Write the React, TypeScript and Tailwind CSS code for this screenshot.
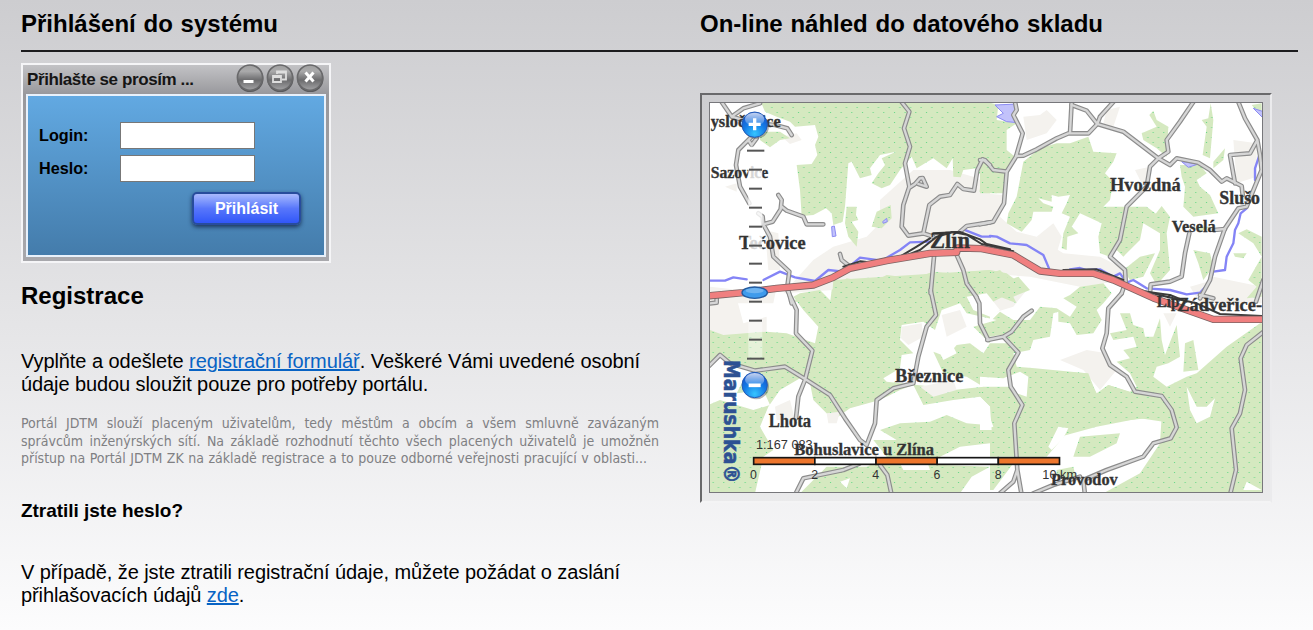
import React from "react";

const quads: Record<string, string> = {
  tl: "translate(0 0)",
  tr: "translate(840 0)",
  bl: "translate(0 600)",
  br: "translate(840 600)",
};
type Shape = [string, string];

const builtUp: Shape[] = [
  ["tl", "M540 330 L640 240 L750 240 L835 265 L870 310 L870 640 L400 600 L250 610 L340 510 L400 470 L500 440 L540 400Z"],
  ["tl", "M30 590 L120 600 L230 590 L220 640 L30 640Z M245 140 L290 130 L305 150 L270 162Z M75 290 L110 280 L110 305Z M195 420 L235 430 L240 540 L205 540Z"],
  ["tr", "M0 310 L75 315 L60 380 L110 425 L170 440 L250 490 L360 500 L440 540 L440 570 L300 590 L150 560 L0 550Z"],
  ["tr", "M130 80 L180 75 L200 60 L230 90 L200 130 L140 150Z M380 60 L420 50 L400 110 L370 100Z M465 240 L510 230 L490 290Z M760 150 L830 160 L830 260 L770 280Z M700 560 L845 590 L845 640 L650 640Z M170 440 L220 400 L245 440 L230 490Z M630 590 L700 570 L660 640Z"],
  ["bl", "M30 20 L110 25 L130 100 L200 80 L200 160 L30 130Z"],
  ["br", "M0 0 L140 0 L100 50 L0 80Z M240 210 L320 180 L380 190 L410 240 L360 300 L310 240Z M550 70 L590 70 L570 110Z"],
];

const forest: Shape[] = [
  ["tl", "M180 30 L870 30 L890 310 L838 305 L850 240 L835 255 L830 235 L790 240 L782 262 L760 260 L758 205 L740 235 L700 205 L650 235 L635 200 L600 240 L570 285 L545 295 L515 280 L535 250 L555 225 L545 205 L588 185 L540 195 L510 235 L515 255 L480 265 L455 215 L445 220 L435 350 L428 395 L400 405 L395 370 L378 355 L340 375 L305 378 L300 300 L290 225 L335 222 L352 195 L345 165 L355 140 L345 105 L285 110 L270 95 L230 80 L195 65Z"],
  ["tl", "M440 350 L470 350 L468 375 L475 390 L455 395 L475 425 L470 470 L445 440 L435 400Z M515 410 L530 365 L572 345 L575 385 L545 415Z M180 125 L240 125 L270 145 L240 150 L210 172 L180 150Z"],
  ["tl", "M390 640 L395 600 L440 565 L500 575 L510 605 L520 575 L560 555 L640 565 L700 545 L760 550 L870 540 L920 550 L960 580 L930 610 L870 640Z M280 635 L310 612 L330 635Z"],
  ["tr", "M0 30 L55 45 L50 90 L110 100 L80 120 L80 180 L105 200 L85 240 L75 310 L0 310Z"],
  ["tr", "M130 215 L180 175 L230 160 L270 160 L325 140 L340 185 L410 190 L400 215 L375 250 L400 275 L390 330 L370 350 L430 350 L500 350 L540 380 L540 430 L490 400 L480 450 L440 490 L430 500 L410 480 L390 500 L360 490 L355 440 L365 400 L300 370 L275 410 L295 430 L262 440 L260 480 L245 475 L250 430 L270 380 L245 370 L260 340 L270 315 L235 320 L215 315 L215 335 L175 325 L190 340 L220 350 L215 365 L160 365 L155 390 L125 425 L80 400 L85 370 L110 320Z"],
  ["tr", "M485 130 L530 110 L508 75 L520 62 L530 90 L565 110 L560 200 L530 175 L490 150Z M665 90 L685 85 L692 40 L700 90 L690 205 L668 195 L680 110Z M700 215 L735 175 L730 210 L700 235Z"],
  ["tr", "M600 225 L660 225 L680 250 L650 270 L660 290 L690 315 L715 370 L640 380 L610 350 L615 290 L605 260Z M520 380 L545 348 L570 380 L560 430 L570 540 L530 585 L510 550 L540 480 L540 430Z M480 500 L525 490 L490 560 L450 570 L430 540Z"],
  ["tr", "M640 480 L690 490 L700 530 L670 570 L655 520Z M760 490 L800 490 L790 505 L765 500Z M800 418 L845 440 L845 500 L820 460 L775 430Z M845 500 L845 620 L800 625 L830 590 L805 570Z M815 45 L845 40 L845 80Z M650 410 L690 410 L660 425Z"],
  ["tr", "M0 560 L60 540 L90 570 L115 560 L150 600 L100 620 L110 640 L60 620 L0 610Z M300 590 L370 580 L395 610 L370 640 L270 615Z"],
  ["bl", "M30 120 L70 135 L200 125 L260 130 L345 160 L355 110 L310 60 L280 20 L300 10 L360 0 L395 35 L400 -30 L870 -60 L870 610 L30 610Z"],
  ["br", "M-20 160 L80 160 L60 135 L30 140 L30 95 L60 65 L100 90 L150 90 L180 50 L230 55 L270 80 L290 50 L250 25 L270 15 L340 20 L370 40 L350 60 L365 90 L340 130 L290 135 L270 100 L235 95 L235 65 L220 70 L210 140 L160 150 L150 180 L100 190 L110 230 L165 235 L320 250 L350 310 L385 285 L450 305 L470 290 L450 250 L410 215 L450 205 L430 180 L470 170 L460 140 L400 150 L390 130 L440 120 L420 70 L450 70 L460 105 L490 115 L495 140 L520 140 L540 85 L545 150 L555 195 L590 105 L600 200 L565 220 L530 230 L520 260 L560 290 L620 260 L650 250 L740 170 L840 100 L860 100 L860 610 L370 610 L480 550 L540 460 L545 380 L450 390 L350 400 L260 430 L200 500 L0 500 L0 420 L40 410 L0 300 L-20 300Z"],
  ["br", "M145 240 L325 250 L350 315 L385 285 L460 310 L540 320 L580 400 L480 385 L350 410 L240 440 L190 500 L110 500 L105 400 L145 330Z M615 160 L640 150 L655 240 L610 245Z M0 0 L40 5 L0 40Z M230 540 L280 530 L290 570 L230 560Z M280 500 L300 440 L420 430 L410 460 L330 500Z M0 510 L100 520 L40 600 L-20 600Z"],
];

const clearings: Shape[] = [
  ["bl", "M180 410 L205 350 L240 300 L300 265 L330 280 L340 330 L400 390 L450 355 L520 335 L560 320 L600 300 L640 285 L670 345 L760 330 L840 320 L870 350 L860 405 L800 400 L740 375 L690 395 L600 400 L540 420 L590 450 L520 450 L560 500 L500 530 L380 530 L300 610 L165 610 L190 500 L220 480Z"],
  ["bl", "M25 230 L60 200 L110 225 L180 240 L130 270 L110 310 L190 300 L210 345 L160 360 L60 330 L25 345Z"],
  ["bl", "M550 265 L600 235 L605 195 L640 190 L600 150 L605 105 L670 95 L705 120 L725 60 L780 40 L800 70 L890 90 L820 110 L870 160 L850 190 L810 160 L770 165 L740 200 L700 185 L730 250 L800 260 L850 290 L760 300 L700 290 L560 275Z M720 190 L760 170 L770 190 L730 210Z M800 20 L860 10 L900 60 L870 80 L820 60Z"],
  ["bl", "M420 575 L450 565 L440 595Z M600 520 L680 510 L690 540 L610 540Z M720 500 L780 470 L870 460 L870 530 L730 525Z M815 560 L870 530 L870 610 L780 610Z"],
  ["br", "M0 320 L30 350 L35 420 L0 420Z M620 290 L650 350 L680 350 L705 325 L690 380 L650 400 L630 360Z M790 600 L800 575 L845 600Z M0 260 L70 265 L120 245 L145 260 L140 320 L110 310 L90 290 L0 290Z"],
  ["br", "M205 470 L235 410 L265 415 L250 445 L215 480Z"],
];

const hamlets: Shape[] = [
  ["bl", "M225 350 L270 330 L285 390 L230 390Z M605 110 L665 100 L670 140 L625 165 L603 145Z M725 75 L780 60 L800 110 L740 140Z M380 370 L420 365 L410 400 L385 400Z M660 290 L760 270 L770 300 L700 320Z"],
];

const water: Shape[] = [
  ["tr", "M45 45 L112 42 L100 70 L112 98 L80 95 L50 80 L70 70Z M605 215 L655 222 L625 232Z M820 55 L850 65 L850 85Z"],
  ["tl", "M395 410 L403 408 L408 438 L397 440Z M548 395 L560 385 L562 395 L550 400Z"],
];

const rivers: Shape[] = [
  ["tl", "M25 572 L75 572 L100 562 L140 568 M190 570 L240 545 L285 562 L345 573 L385 540 L430 545 L480 503 L545 512 L600 480 L630 457 L690 455 M790 418 L845 440 L870 440"],
  ["tr", "M30 438 L50 440 L90 460 L140 465 L190 495 L207 535 M270 538 L300 534 L320 540 L360 538 L400 560 L420 550 L440 578 L460 570 L500 595 L570 600 L620 613 L660 608 L690 575 L700 545 L735 540 L740 500 L760 460 L765 420 L775 400 L782 370 L800 355 M825 270 L825 235 L840 190"],
];

const rails: Shape[] = [
  ["tl", "M430 530 L480 514 L520 518 L600 500 L650 470 L690 445 M610 500 L660 480 L710 440 L760 426 L800 434 L845 462 L940 484 M700 430 L780 426 L840 448 L860 462 L930 478"],
  ["tr", "M250 540 L350 538 L430 570 M500 605 L570 615 L620 635"],
  ["br", "M480 0 L560 20 L650 40 L720 72 L850 78"],
];

const roads: Shape[] = [
  ["tl", "M605 36 L628 65 L612 115 L630 170 L615 220 L628 290 L610 345 L605 410 L625 437 L670 430 L700 440 M628 293 L645 282 L660 265 L668 264 L680 290 L655 282 M670 430 L688 345 L720 320 L750 315 L772 282 L790 297 L822 302 L832 240 L848 208 L870 225"],
  ["tl", "M65 36 L95 80 L130 55 L180 40 M95 80 L165 100 L225 105 L262 115 L275 135 M155 140 L115 180 L108 225 L120 290 L148 340 M145 150 L155 165 L170 145"],
  ["tl", "M175 370 L188 380 L190 403 L218 395 L242 358 L245 330 L235 315 M245 350 L260 362 L310 380 L320 403 L370 403 M190 403 L210 440 L220 500 L268 545 L262 590 L275 640 M450 530 L425 510 L420 492"],
  ["tl", "M702 500 L692 610 M768 490 L790 540 L800 580 L830 622 M780 425 L800 408 L870 397"],
  ["tr", "M105 36 L110 60 L100 75 L128 130 L108 200 L80 245 L72 340 L40 395 L0 403 M0 210 L15 210 L40 240 L80 245 M108 198 L130 197 L170 178 L230 145 L265 130 L325 130 L352 102 L360 80 L400 36 M275 36 L270 130"],
  ["tr", "M275 45 L320 62 L352 102 L430 125 L535 205 M640 36 L600 95 L560 150 L565 185 L535 205 L510 230 L500 290 L440 350 L430 400 L420 450 L390 500 L435 540 L437 575 L425 610"],
  ["tr", "M535 205 L570 225 L590 205 L655 218 L690 240 L725 275 L740 265 L785 288 L788 315 M775 36 L795 85 L832 150 L840 195 L845 240 L800 350 L775 355 L735 415 L705 500 L690 570 L660 625 M832 150 L810 190 L750 195 L765 280"],
  ["tr", "M628 430 L615 490 L605 560 L570 575 L512 583 L510 610 M702 420 L735 417 M850 570 L828 635 M660 615 L700 625"],
  ["bl", "M262 0 L290 60 L288 130 L337 182 L315 270 L295 320 L288 385 M20 235 L60 195 L90 220 L165 242 L255 230 L320 270 L390 315 L435 385 L480 450 L500 465 L525 400 L530 330 L580 295 L640 280 L655 200 L680 110 L708 75 L692 0"],
  ["bl", "M828 20 L838 40 L840 100 L865 150 M285 615 L310 565 L430 540 L480 520 M540 525 L562 555 L575 615 M30 40 L50 38 L50 25"],
  ["br", "M425 10 L385 55 L380 130 L367 175 L390 225 L440 260 L465 305 L545 318 L575 360 L590 412 L572 445 L520 460 L490 500 L380 540 L310 570 L315 615"],
  ["br", "M22 150 L70 140 L115 188 L85 240 L92 290 L127 345 L103 400 L112 540 L125 615 M112 540 L100 575 L60 610 M70 140 L95 125 L130 80 L155 62"],
  ["br", "M855 122 L800 165 L782 205 L795 300 L780 370 L755 415 L768 540 L750 615 M160 610 L220 585 L300 560"],
];

const highway = "M20 618 L130 608 L230 595 L340 585 L400 562 L450 535 L560 512 L690 490 L770 487 L772 474 L845 476 L940 495 L1020 543 L1080 550 L1180 550 L1240 570 L1360 624 L1540 688 L1700 688";

const places: [string, number, number, number, number][] = [
  ["ysločovice", 32, 110, 210, 50],
  ["Sazovice", 32, 264, 173, 50],
  ["Tečovice", 117, 478, 200, 55],
  ["Zlín", 690, 474, 120, 68],
  ["Hvozdná", 1230, 304, 212, 56],
  ["Slušo", 1558, 341, 122, 55],
  ["Veselá", 1415, 427, 132, 52],
  ["Líp", 1370, 650, 68, 52],
  ["Zádveřice-", 1432, 662, 254, 55],
  ["Březnice", 585, 876, 205, 54],
  ["Lhota", 206, 1010, 127, 54],
  ["Bohuslavice u Zlína", 283, 1095, 419, 52],
  ["Provodov", 1053, 1186, 200, 52],
];

function Shapes({ items, ...rest }: { items: Shape[] } & React.SVGProps<SVGPathElement>) {
  return (
    <>
      {items.map(([q, d], i) => (
        <path key={i} d={d} transform={quads[q]} {...rest} />
      ))}
    </>
  );
}

function MapView() {
  const line = { fill: "none", strokeLinejoin: "round", strokeLinecap: "round" } as const;
  return (
    <svg className="block h-[391px] w-[554px] border border-[#77777b]" viewBox="30 39 1656 1167" preserveAspectRatio="none">
      <defs>
        <pattern id="trees" width="32" height="30" patternUnits="userSpaceOnUse">
          <rect width="32" height="30" fill="#d5e9c0" />
          <rect x="6" y="6" width="3" height="3" fill="#5cd882" />
          <rect x="22" y="21" width="3" height="3" fill="#5cd882" />
        </pattern>
        <radialGradient id="ball" cx=".5" cy=".85" r=".8">
          <stop offset="0" stopColor="#35c4ff" />
          <stop offset=".55" stopColor="#147be6" />
          <stop offset="1" stopColor="#1754cb" />
        </radialGradient>
        <linearGradient id="gloss" x2="0" y2="1">
          <stop stopColor="#fff" stopOpacity=".75" />
          <stop offset="1" stopColor="#fff" stopOpacity=".1" />
        </linearGradient>
      </defs>
      <rect x="27" y="36" width="1662" height="1173" fill="#fff" />
      <Shapes items={builtUp} fill="#f4f2ee" />
      <Shapes items={forest} fill="url(#trees)" />
      <Shapes items={clearings} fill="#fff" />
      <Shapes items={hamlets} fill="#f4f2ee" />
      <Shapes items={water} fill="#c2c2fb" stroke="#8b8bf2" strokeWidth="3" />
      <Shapes items={rivers} {...line} stroke="#8484f6" strokeWidth="7" />
      <Shapes items={roads} {...line} stroke="#8c8c8c" strokeWidth="14" />
      <Shapes items={roads} {...line} stroke="#d6d6d6" strokeWidth="7" />
      <Shapes items={rails} {...line} stroke="#3b3b3b" strokeWidth="6" />
      <path d={highway} {...line} strokeLinecap="butt" stroke="#7d6464" strokeWidth="22" />
      <path d={highway} {...line} strokeLinecap="butt" stroke="#f07f7f" strokeWidth="17" />
      <g className="font-['Liberation_Serif',serif] font-bold" fill="#333" stroke="#333" strokeWidth="1">
        {places.map(([name, x, y, w, size]) => (
          <text key={name} x={x} y={y} fontSize={size} textLength={w} lengthAdjust="spacingAndGlyphs">
            {name}
          </text>
        ))}
      </g>
      <rect x="145" y="170" width="42" height="410" fill="#fff" opacity=".8" />
      <rect x="145" y="630" width="42" height="180" fill="#fff" opacity=".4" />
      <g fill="#555">
        {[182, 239, 296, 353, 410, 467, 521, 578, 635, 692, 749, 806].map((y, i) => (
          <rect key={y} x={i % 11 ? 147 : 141} y={y - 3} width={i % 11 ? 39 : 52} height="6" />
        ))}
      </g>
      <g>
        <ellipse cx="168" cy="109" rx="39" ry="38" fill="#555" opacity=".45" />
        <circle cx="164" cy="104" r="38" fill="url(#ball)" stroke="#235bb7" strokeWidth="3" />
        <ellipse cx="164" cy="88" rx="29" ry="20" fill="url(#gloss)" />
        <path d="M146 103H182M164 85V121" stroke="#fff" strokeWidth="10" />
        <ellipse cx="164" cy="608" rx="38" ry="17" fill="#3f9bec" stroke="#235b9f" strokeWidth="4" />
        <ellipse cx="164" cy="602" rx="27" ry="8" fill="#fff" opacity=".25" />
        <ellipse cx="168" cy="890" rx="39" ry="38" fill="#555" opacity=".45" />
        <circle cx="164" cy="885" r="38" fill="url(#ball)" stroke="#235bb7" strokeWidth="3" />
        <ellipse cx="164" cy="869" rx="29" ry="20" fill="url(#gloss)" />
        <path d="M146 886H182" stroke="#fff" strokeWidth="11" />
      </g>
      <text className="font-['DejaVu_Sans_Condensed','DejaVu_Sans',sans-serif] font-bold" transform="translate(71 810) rotate(90)" fontSize="62" fill="#2d5193" stroke="#2d5193" strokeWidth="1.500" textLength="370" lengthAdjust="spacingAndGlyphs">
        Marushka®
      </text>
      <g className="font-['Liberation_Sans',sans-serif]" fontSize="37" fill="#333">
        <text x="168" y="1078" textLength="170" lengthAdjust="spacingAndGlyphs">1:167 083</text>
        {["0", "2", "4", "6", "8"].map((n, i) => (
          <text key={n} x={160 + i * 183.7} y="1166" textAnchor="middle">{n}</text>
        ))}
        <text x="1027" y="1166" textLength="104" lengthAdjust="spacingAndGlyphs">10 km</text>
      </g>
      <g stroke="#151515" strokeWidth="5">
        {[0, 1, 2, 3, 4].map((i) => (
          <rect key={i} x={161 + i * 183.5} y="1103" width="183.5" height="20" fill={i % 2 ? "#fff" : "#ee762d"} />
        ))}
      </g>
    </svg>
  );
}

function WindowIcon({ kind }: { kind: "min" | "restore" | "close" }) {
  return (
    <svg className="h-[30px] w-[30px]" viewBox="0 0 30 30">
      <defs>
        <linearGradient id={kind} x2="0" y2="1">
          <stop stopColor="#a0a0a1" />
          <stop offset=".25" stopColor="#aaaaab" />
          <stop offset=".5" stopColor="#7d7d7f" />
          <stop offset=".6" stopColor="#6c6c6e" />
          <stop offset="1" stopColor="#a3a3a5" />
        </linearGradient>
      </defs>
      <circle cx="15.3" cy="15.8" r="13.2" fill="#59595b" />
      <circle cx="15" cy="14.6" r="12.6" fill={`url(#${kind})`} stroke="#69696b" strokeWidth="1.600" />
      {kind === "min" && <path d="M8.500 18.500h10" stroke="#fff" strokeWidth="3" />}
      {kind === "restore" && <path d="M12 11V8.500h9v8h-4M8 13h8v6h-8zM12 9.500h9M8 14h8" fill="none" stroke="#dedede" strokeWidth="1.800" />}
      {kind === "close" && <path d="m10.500 9.500 8 9m0-9-8 9" stroke="#fff" strokeWidth="3" />}
    </svg>
  );
}

function Line({ w, children }: { w: string; children: React.ReactNode }) {
  return <div className={`${w} whitespace-nowrap text-justify [text-align-last:justify]`}>{children}</div>;
}

export default function App() {
  return (
    <div className="h-[630px] w-[1313px] overflow-hidden bg-linear-to-b from-[#cdcdd0] to-[#fcfcfd] px-[15px] font-['Liberation_Sans',Arial,sans-serif] text-black">
      <header className="ml-[6px] flex h-[52px] border-b-2 border-[#1c1c1e] pt-[9px] text-[24px] leading-[29px] font-bold">
        <div className="w-[679px]"><h1 className="w-[257px] whitespace-nowrap [text-align-last:justify]">Přihlášení do systému</h1></div>
        <h1 className="w-[403px] whitespace-nowrap [text-align-last:justify]">On-line náhled do datového skladu</h1>
      </header>
      <main className="ml-[6px] flex">
        <section className="w-[679px] pt-[11px]">
          <form className="h-[200px] w-[310px] border-2 border-[#f5f5f7] bg-linear-to-b from-[#c3c3c6] via-[#98989c] via-15% to-[#a8a8ac] px-[3px]">
            <div className="flex h-[28px] items-center">
              <div className="w-[168px] pt-[2px] pl-px text-[17px] font-bold tracking-[-0.4px] whitespace-nowrap text-[#151515]">Přihlašte se prosím ...</div>
              <div className="-mt-[2px] ml-[41px] flex"><WindowIcon kind="min" /><WindowIcon kind="restore" /><WindowIcon kind="close" /></div>
            </div>
            <div className="mt-px h-[163px] w-[300px] border-2 border-[#e8f1fb] bg-linear-to-b from-[#62a9e2] to-[#447cab] pt-[26px] pl-[11px] text-[16.200px] font-bold">
              <label className="flex h-[27px] items-center">
                <span className="w-[81px]">Login:</span>
                <input className="h-[27px] w-[135px] border border-[#777] bg-white" />
              </label>
              <label className="mt-[6px] flex h-[27px] items-center">
                <span className="w-[81px]">Heslo:</span>
                <input type="password" className="h-[27px] w-[135px] border border-[#777] bg-white" />
              </label>
              <button type="button" className="mt-[10px] ml-[153px] flex h-[33px] w-[109px] items-center justify-center rounded-[5px] border-2 border-[#284c9c] bg-linear-to-b from-[#a9b8fc] via-[#5876fb] via-50% to-[#3156f8] text-[16px] text-white shadow-[0_2px_4px_#1b355c]">Přihlásit</button>
            </div>
          </form>
          <h2 className="mt-[18px] text-[24px] leading-[29px] font-bold"><span className="block w-[124px] [text-align-last:justify]">Registrace</span></h2>
          <div className="mt-[40px] text-[20px] leading-[22.500px] tracking-[-0.09px]">
            <Line w="w-[619px]">Vyplňte a odešlete <a href="#" className="text-[#0863c4] underline">registrační formulář</a>. Veškeré Vámi uvedené osobní</Line>
            <Line w="w-[407px]">údaje budou sloužit pouze pro potřeby portálu.</Line>
          </div>
          <div className="mt-[20px] font-['DejaVu_Sans_Condensed','DejaVu_Sans',sans-serif] text-[14px] leading-[17.700px] text-[#808083]">
            <Line w="w-[638px]">Portál JDTM slouží placeným uživatelům, tedy městům a obcím a všem smluvně zavázaným</Line>
            <Line w="w-[638px]">správcům inženýrských sítí. Na základě rozhodnutí těchto všech placených uživatelů je umožněn</Line>
            <Line w="w-[626px]"><span className="tracking-[-0.02px]">přístup na Portál JDTM ZK na základě registrace a to pouze odborné veřejnosti pracující v oblasti...</span></Line>
          </div>
          <h3 className="mt-[31px] w-[162px] text-[19px] leading-[24px] font-bold tracking-[-0.03px] whitespace-nowrap">Ztratili jste heslo?</h3>
          <div className="mt-[38px] text-[20px] leading-[22.500px] tracking-[-0.1px]">
            <Line w="w-[599px]">V případě, že jste ztratili registrační údaje, můžete požádat o zaslání</Line>
            <Line w="w-[223px]">přihlašovacích údajů <a href="#" className="text-[#0863c4] underline">zde</a>.</Line>
          </div>
        </section>
        <section className="mt-[41px] h-[410px] w-[572px] border-t-2 border-r-2 border-b-2 border-l-2 border-t-[#69696b] border-r-[#ebebed] border-b-[#f4f4f5] border-l-[#69696b] bg-black/3 pt-[7px] pl-[7px]">
          <MapView />
        </section>
      </main>
    </div>
  );
}
